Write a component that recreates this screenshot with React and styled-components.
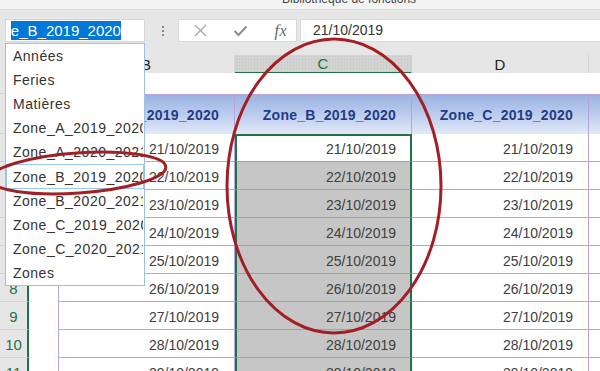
import React from "react";
import styled, { createGlobalStyle, css } from "styled-components";

const GREEN = "#217346";
const PURPLE = "#b9a3dd";
const HEADGRID = "#d2d2d2";

const GlobalStyle = createGlobalStyle`
  html, body { margin: 0; padding: 0; background: #ffffff; overflow: hidden; }
  * { box-sizing: border-box; }
`;

const Page = styled.div`
  position: relative;
  width: 600px;
  height: 371px;
  overflow: hidden;
  font-family: "Liberation Sans", Arial, sans-serif;
  background: #ffffff;
`;

const TitleStrip = styled.div`
  height: 10px;
  background: #f4f4f4;
  border-bottom: 1px solid #dedede;
  overflow: hidden;
  padding-left: 282px;
`;

const TitleText = styled.div`
  margin-top: -7px;
  font-size: 12px;
  line-height: 13px;
  color: #444;
  white-space: nowrap;
`;

const FormulaBar = styled.div`
  height: 45px;
  background: #e6e6e6;
  display: flex;
  align-items: flex-start;
  padding: 9px 0 0 5px;
`;

const NameBox = styled.div`
  width: 140px;
  height: 23px;
  background: #ffffff;
  border: 1px solid #d6d6d6;
  padding: 1px 0 0 5px;
  overflow: hidden;
`;

const NameClip = styled.div`
  overflow: hidden;
  white-space: nowrap;
  height: 19px;
`;

const Selected = styled.span`
  display: inline-block;
  margin-left: -26px;
  background: #0078d7;
  color: #ffffff;
  font-size: 15px;
  line-height: 19px;
  height: 19px;
`;

const Dots = styled.div`
  width: 33px;
  height: 23px;
  display: flex;
  flex-direction: column;
  align-items: center;
  justify-content: center;
  gap: 2px;
  padding-left: 2px;
`;

const Dot = styled.span`
  width: 2px;
  height: 2px;
  background: #8a8a8a;
`;

const ButtonsBox = styled.div`
  width: 119px;
  height: 23px;
  background: #ffffff;
  border: 1px solid #dadada;
  display: flex;
  align-items: center;
  justify-content: space-between;
  padding: 0 9px 0 15px;
  margin-right: 3px;
`;

const Fx = styled.span`
  font-family: "Liberation Serif", "Times New Roman", serif;
  font-style: italic;
  font-size: 16px;
  color: #666;
  letter-spacing: 0.5px;
`;

const FormulaInput = styled.div`
  flex: 1;
  height: 23px;
  background: #ffffff;
  border: 1px solid #dadada;
  border-right: none;
  padding-left: 12px;
  font-size: 14px;
  line-height: 21px;
  color: #333;
`;

const cols = "29px 29px 177px 177px 177px 177px";

const SheetRow = styled.div`
  display: grid;
  grid-template-columns: ${cols};
  height: ${(p) => p.$h}px;
`;

const ColHead = styled.div`
  background: ${(p) => (p.$active ? "#d3d3d3" : "#e6e6e6")};
  border-right: 1px solid ${HEADGRID};
  border-bottom: ${(p) => (p.$active ? `2px solid ${GREEN}` : `1px solid ${HEADGRID}`)};
  display: flex;
  align-items: center;
  justify-content: center;
  font-size: 15px;
  color: ${(p) => (p.$active ? GREEN : "#222")};
  ${(p) =>
    p.$active &&
    css`
      background-image: radial-gradient(#c4c4c4 0.6px, transparent 0.8px);
      background-size: 3px 3px;
    `}
`;

const RowHead = styled.div`
  background: #e6e6e6;
  border-bottom: 1px solid ${HEADGRID};
  border-right: ${(p) => (p.$sel ? `2px solid ${GREEN}` : `1px solid ${HEADGRID}`)};
  display: flex;
  align-items: center;
  justify-content: center;
  font-size: 15px;
  color: ${(p) => (p.$sel ? GREEN : "#222")};
  padding-top: 2px;
`;

const Blank = styled.div`
  background: #ffffff;
`;

const HeadCell = styled.div`
  background: linear-gradient(to bottom, #9bb3e2 0%, #bccced 50%, #e2e9f8 100%);
  border-top: 1px solid ${PURPLE};
  border-right: 1px solid ${PURPLE};
  border-left: ${(p) => (p.$first ? `1px solid ${PURPLE}` : "none")};
  display: flex;
  align-items: center;
  justify-content: flex-end;
  padding: 0 15px 0 0;
  font-weight: bold;
  font-size: 14px;
  letter-spacing: 0.25px;
  color: #1f3c88;
  white-space: nowrap;
  overflow: hidden;
`;

const DataCell = styled.div`
  background: ${(p) => (p.$sel && !p.$active ? "#c6c6c6" : "#ffffff")};
  border-bottom: 1px solid ${(p) => (p.$sel ? "#a896c4" : PURPLE)};
  border-right: ${(p) => (p.$sel ? `2px solid ${GREEN}` : `1px solid ${PURPLE}`)};
  border-left: ${(p) =>
    p.$sel ? `2px solid ${GREEN}` : p.$first ? `1px solid ${PURPLE}` : "none"};
  ${(p) =>
    p.$top &&
    css`
      box-shadow: inset 0 2px 0 ${GREEN};
    `}
  display: flex;
  align-items: center;
  justify-content: flex-end;
  padding: 2px ${(p) => (p.$sel ? 14 : 15)}px 0 0;
  font-size: 14px;
  color: #404040;
  white-space: nowrap;
`;

const Dropdown = styled.div`
  position: absolute;
  left: 5px;
  top: 43px;
  width: 140px;
  height: 243px;
  background: #ffffff;
  border: 1px solid #9cc0e6;
  display: flex;
  flex-direction: column;
  overflow: hidden;
`;

const Item = styled.div`
  height: 24.1px;
  flex: none;
  display: flex;
  align-items: center;
  padding-left: 6px;
  font-size: 14px;
  letter-spacing: 0.5px;
  color: #333;
  white-space: nowrap;
  overflow: hidden;
  border: 1px solid ${(p) => (p.$hl ? "#99c9ef" : "transparent")};
`;

const Overlay = styled.svg`
  position: absolute;
  left: 0;
  top: 0;
  pointer-events: none;
`;

const names = [
  "Années",
  "Feries",
  "Matières",
  "Zone_A_2019_2020",
  "Zone_A_2020_2021",
  "Zone_B_2019_2020",
  "Zone_B_2020_2021",
  "Zone_C_2019_2020",
  "Zone_C_2020_2021",
  "Zones",
];

const rows = [3, 4, 5, 6, 7, 8, 9, 10, 11].map((n) => ({
  n,
  date: `${18 + n}/10/2019`,
}));

export default function App() {
  return (
    <Page>
      <GlobalStyle />
      <TitleStrip>
        <TitleText>Bibliothèque de fonctions</TitleText>
      </TitleStrip>
      <FormulaBar>
        <NameBox>
          <NameClip>
            <Selected>Zone_B_2019_2020</Selected>
          </NameClip>
        </NameBox>
        <Dots>
          <Dot />
          <Dot />
          <Dot />
        </Dots>
        <ButtonsBox>
          <svg width="13" height="13" viewBox="0 0 13 13">
            <path d="M1 1 L12 12 M12 1 L1 12" stroke="#a6a6a6" strokeWidth="1.3" fill="none" />
          </svg>
          <svg width="15" height="12" viewBox="0 0 15 12">
            <path d="M1.5 6 L5.5 10 L13.5 1.5" stroke="#8e8e8e" strokeWidth="2" fill="none" />
          </svg>
          <Fx>fx</Fx>
        </ButtonsBox>
        <FormulaInput>21/10/2019</FormulaInput>
      </FormulaBar>

      <SheetRow $h={18}>
        <ColHead />
        <ColHead />
        <ColHead>B</ColHead>
        <ColHead $active>C</ColHead>
        <ColHead>D</ColHead>
        <ColHead />
      </SheetRow>

      <SheetRow $h={21}>
        <RowHead />
        <Blank />
        <Blank />
        <Blank />
        <Blank />
        <Blank />
      </SheetRow>

      <SheetRow $h={40}>
        <RowHead />
        <Blank />
        <HeadCell $first>Zone_A_2019_2020</HeadCell>
        <HeadCell>Zone_B_2019_2020</HeadCell>
        <HeadCell>Zone_C_2019_2020</HeadCell>
        <HeadCell />
      </SheetRow>

      {rows.map((r, i) => (
        <SheetRow key={r.n} $h={28}>
          <RowHead $sel>{r.n >= 8 ? r.n : ""}</RowHead>
          <Blank />
          <DataCell $first>{r.date}</DataCell>
          <DataCell $sel $active={i === 0} $top={i === 0}>
            {r.date}
          </DataCell>
          <DataCell>{r.date}</DataCell>
          <DataCell />
        </SheetRow>
      ))}

      <Dropdown>
        {names.map((n, i) => (
          <Item key={n} $hl={i === 5}>
            {n}
          </Item>
        ))}
      </Dropdown>

      <Overlay width="600" height="371" viewBox="0 0 600 371">
        <ellipse cx="334" cy="186" rx="107" ry="147" fill="none" stroke="#a21f25" strokeWidth="3" />
        <ellipse
          cx="78"
          cy="173"
          rx="88"
          ry="20"
          transform="rotate(-4 78 173)"
          fill="none"
          stroke="#a21f25"
          strokeWidth="3"
        />
      </Overlay>
    </Page>
  );
}
